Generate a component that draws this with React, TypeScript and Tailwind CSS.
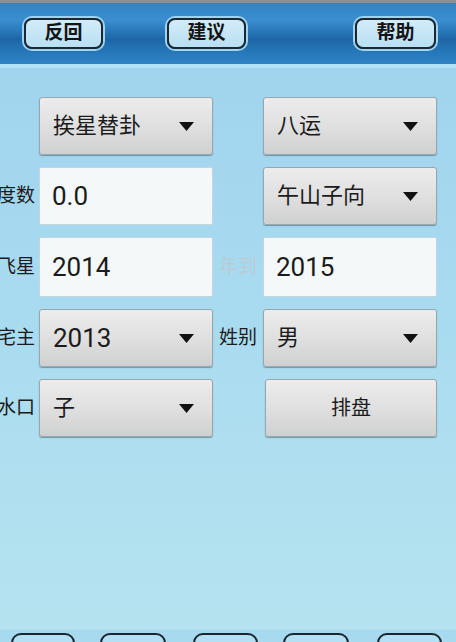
import React from "react";

const font = "font-['Roboto','Noto_Sans_CJK_SC',sans-serif]";

const Arrow = () => (
  <svg width="15" height="9" viewBox="0 0 15 9" className="shrink-0">
    <polygon points="0,0 15,0 7.5,9" fill="#111" />
  </svg>
);

const Spinner = ({ value, digits = false }: { value: string; digits?: boolean }) => (
  <div className="h-full flex items-center justify-between pl-[13px] pr-[18px] rounded-[3px] border border-[#9aa6ad] bg-gradient-to-b from-[#ececec] via-[#e0e0e0] to-[#cfd0d0] shadow-[0_1px_1px_rgba(40,70,90,0.45)]">
    <span className={`${digits ? "text-[26px]" : "text-[22px]"} text-[#1b1b1b] leading-none`}>{value}</span>
    <Arrow />
  </div>
);

const Field = ({ value }: { value: string }) => (
  <div className="h-full flex items-center pl-[12px] rounded-[2px] border border-[#c3d6de] bg-[#f4f8f8]">
    <span className="text-[26px] text-[#1b1b1b] leading-none">{value}</span>
  </div>
);

const Label = ({ text, faint = false, side = "left" }: { text: string; faint?: boolean; side?: "left" | "mid" }) => (
  <div
    className={`h-full flex items-center whitespace-nowrap overflow-hidden text-[19px] ${
      side === "left" ? "justify-end pr-[4px]" : "justify-center"
    } ${faint ? "text-[#b8ccd4]" : "text-[#1b1b1b]"}`}
  >
    {text}
  </div>
);

const TopButton = ({ text, className = "" }: { text: string; className?: string }) => (
  <button
    className={`h-[31px] flex items-center justify-center rounded-[8px] border-2 border-[#1b2731] ring-2 ring-[#9fd3ee] bg-gradient-to-b from-[#d3ecf8] to-[#b9dff2] text-[19px] font-bold text-[#141414] ${className}`}
  >
    {text}
  </button>
);

export default function App() {
  const bottomTabs = [
    "ml-[11px] w-[64px]",
    "ml-[25px] w-[66px]",
    "ml-[27px] w-[65px]",
    "ml-[25px] w-[66px]",
    "ml-[28px] w-[65px]",
  ];

  return (
    <div className={`${font} w-[456px] h-[642px] overflow-hidden flex flex-col bg-gradient-to-b from-[#9ed3ee] via-[#a9dbf0] to-[#b6e3ef]`}>
      <div className="h-[3px] bg-[#8a9196]" />
      <header className="h-[61px] flex items-center bg-[linear-gradient(to_bottom,#3185c5_0%,#3a8ecf_28%,#2a79bb_45%,#1d66a6_60%,#2677b9_80%,#2f84c5_100%)]">
        <TopButton text="反回" className="ml-[24px] w-[79px]" />
        <TopButton text="建议" className="ml-[64px] w-[79px]" />
        <TopButton text="帮助" className="ml-auto mr-[20px] w-[81px]" />
      </header>
      <div className="h-[4px] bg-[#b2e2f6]" />

      <main className="flex-1 pt-[29px]">
        <div className="grid grid-cols-[39px_174px_50px_174px] grid-rows-[58px_58px_60px_58px_58px] gap-y-[12px]">
          <div />
          <Spinner value="挨星替卦" />
          <div />
          <Spinner value="八运" />

          <Label text="度数" />
          <Field value="0.0" />
          <div />
          <Spinner value="午山子向" />

          <Label text="飞星" />
          <Field value="2014" />
          <Label text="年到" faint side="mid" />
          <Field value="2015" />

          <Label text="宅主" />
          <Spinner value="2013" digits />
          <Label text="姓别" side="mid" />
          <Spinner value="男" />

          <Label text="水口" />
          <Spinner value="子" />
          <div />
          <button className="h-full ml-[2px] rounded-[3px] border border-[#9aa6ad] bg-gradient-to-b from-[#ececec] via-[#e0e0e0] to-[#cfd0d0] shadow-[0_1px_1px_rgba(40,70,90,0.45)] text-[20px] text-[#1b1b1b]">
            排盘
          </button>
        </div>
      </main>

      <footer className="h-[12px] flex items-start bg-[#a7d9ef]">
        {bottomTabs.map((c, i) => (
          <div key={i} className={`${c} mt-[3px] h-[40px] shrink-0 rounded-[10px] border-2 border-[#1a2630] bg-[#b3e0f2]`} />
        ))}
      </footer>
    </div>
  );
}
